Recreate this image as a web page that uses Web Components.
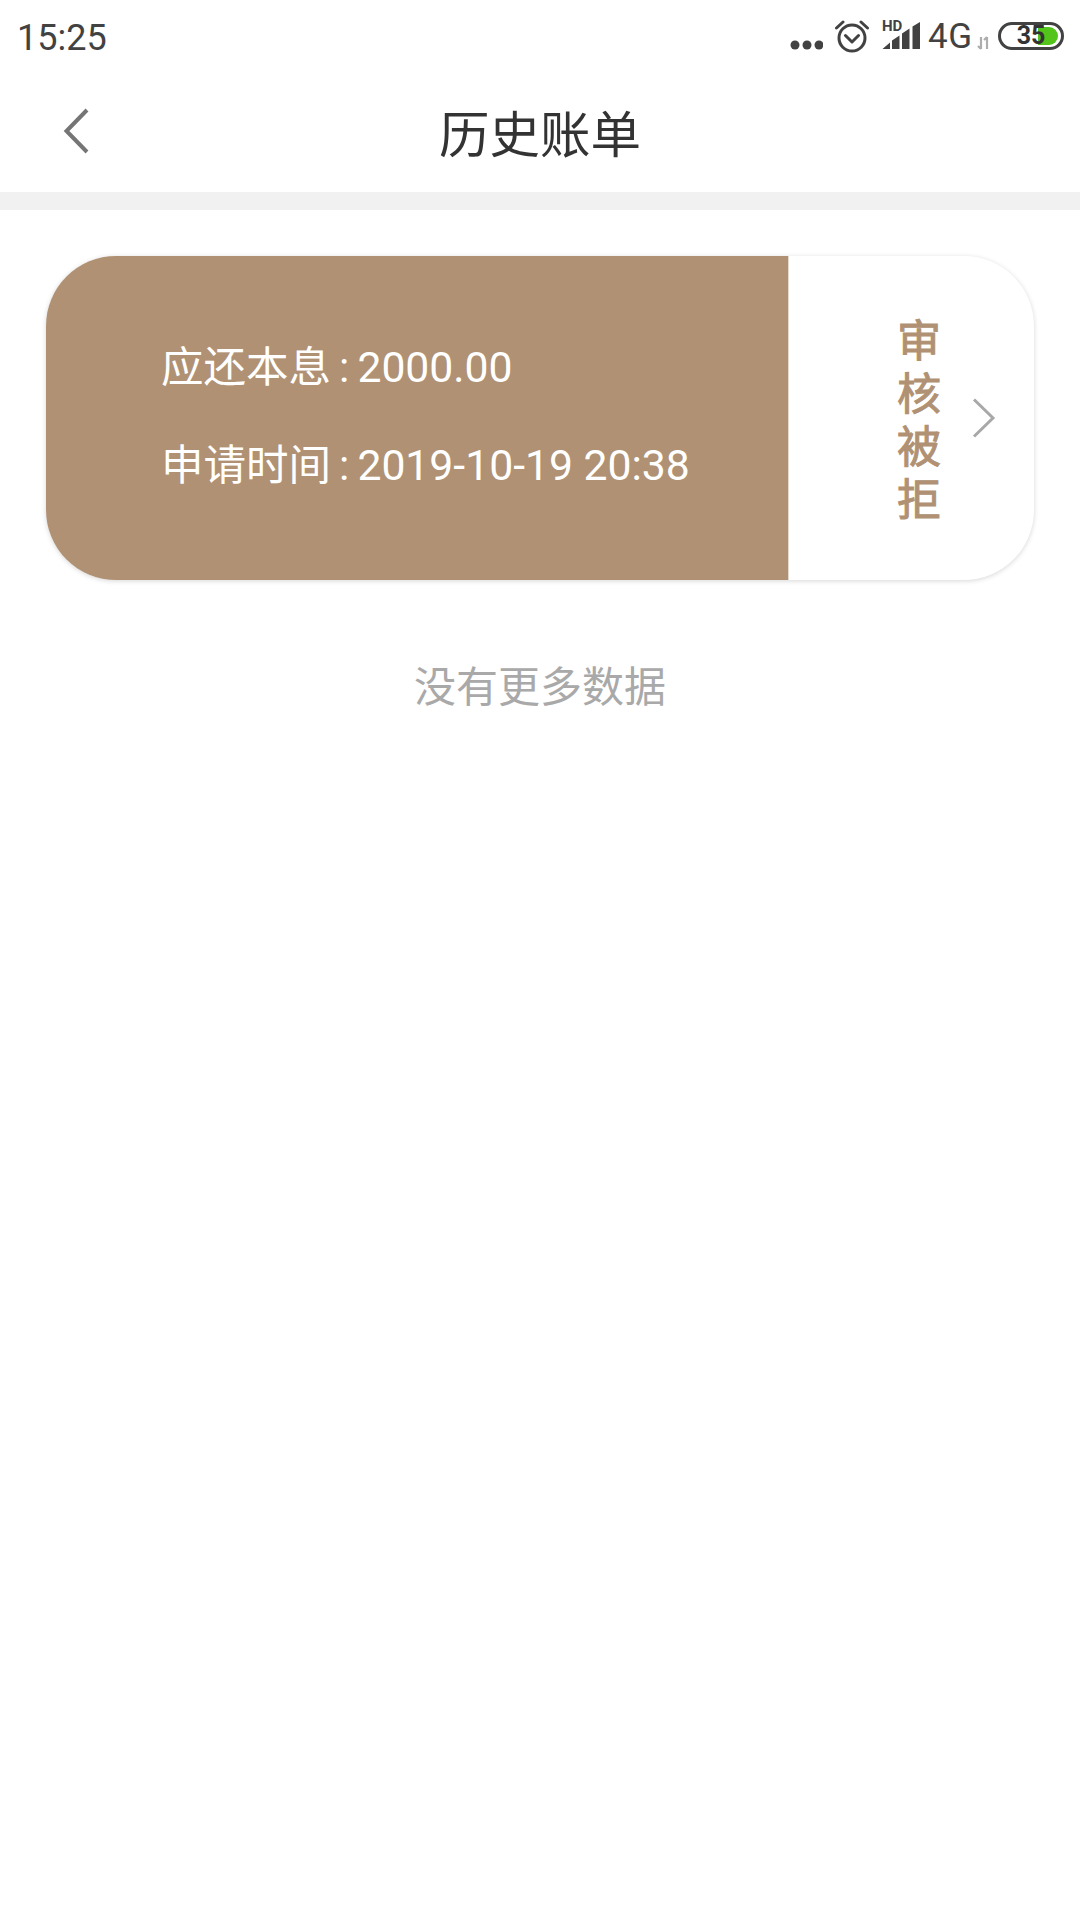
<!DOCTYPE html>
<html lang="zh">
<head>
<meta charset="utf-8">
<title>历史账单</title>
<style>
  html, body { margin: 0; padding: 0; background: #fff; }
  body { width: 1080px; height: 1920px; font-family: Roboto, "Noto Sans CJK SC", sans-serif; }
  bill-card b { font-weight: 400; font-size: 42.700px; word-spacing: 0; }
</style>
</head>
<body>
<status-bar time="15:25"></status-bar>
<nav-header>历史账单</nav-header>
<bill-list>
  <bill-card status="审核被拒">
    <span>应还本息 : <b>2000.00</b></span>
    <span>申请时间 : <b>2019-10-19 20:38</b></span>
  </bill-card>
  <list-end>没有更多数据</list-end>
</bill-list>

<script>
class StatusBar extends HTMLElement {
  constructor() {
    super();
    this.attachShadow({ mode: 'open' });
  }

  connectedCallback() {
    this.shadowRoot.innerHTML = `
      <style>
        :host {
          display: flex;
          align-items: center;
          justify-content: space-between;
          height: 62px;
          padding: 0 16px 0 17px;
          color: #424242;
          font-family: Roboto, sans-serif;
        }
        .time { font-size: 36px; padding-top: 13px; line-height: 48px; }
        .icons { display: flex; align-self: flex-start; align-items: flex-start; padding-top: 20px; }
        .icons svg { display: block; flex: none; }
        .signal { position: relative; margin-left: 11px; width: 41px; height: 30px; }
        .hd { position: absolute; left: 1px; top: -1px; font-size: 15px; font-weight: 700; line-height: 14px; }
        .net { font-size: 35px; line-height: 34px; margin: 0 0 0 6px; width: 45px; letter-spacing: 0.5px; }
        .battery { position: relative; margin: 2px 0 0 7px; width: 66px; height: 28px; }
        .level {
          position: absolute; left: 15px; top: 0; width: 36px; text-align: center;
          font-size: 25px; font-weight: 700; line-height: 28px; color: #333;
        }
      </style>
      <div class="time">${this.getAttribute('time')}</div>
      <div class="icons">
        <svg width="33" height="36" viewBox="0 0 33 36" style="margin-top:14px"><g fill="#424242"><circle cx="5" cy="11" r="4.5"/><circle cx="17" cy="11" r="4.5"/><circle cx="29" cy="11" r="4.5"/></g></svg>
        <svg width="36" height="36" viewBox="0 0 36 36" style="margin-left:11px" fill="none" stroke="#424242" stroke-width="3">
          <circle cx="18" cy="18" r="13"/>
          <path d="M11.500 15.500 18 22 24.500 15.500M2.500 8 9 2M33.500 8 27 2" stroke-linecap="round" stroke-linejoin="round"/>
        </svg>
        <div class="signal">
          <span class="hd">HD</span>
          <svg width="41" height="30" viewBox="0 0 41 30" fill="#424242">
            <path d="M1.500 29 9 22.500V29ZM11 29V20.500L18.500 15.500V29ZM21 29V13.500L28.500 8.500V29ZM31.500 29V6.500L39 2V29Z"/>
          </svg>
        </div>
        <div class="net">4G</div>
        <svg width="14" height="14" viewBox="0 0 14 14" style="margin:16px 0 0 4px" fill="none" stroke="#adadad" stroke-width="2.200"><path d="M4 1v12M1 10 4 13M10 13V1M7 4 10 1"/></svg>
        <div class="battery">
          <svg width="66" height="28" viewBox="0 0 66 28">
            <path d="M40 5h11a9 9 0 0 1 0 18H40z" fill="#52c41a"/>
            <rect x="1.500" y="1.500" width="63" height="25" rx="12.500" fill="none" stroke="#424242" stroke-width="3"/>
          </svg>
          <span class="level">35</span>
        </div>
      </div>
    `;
  }
}

class NavHeader extends HTMLElement {
  constructor() {
    super();
    this.attachShadow({ mode: 'open' });
  }

  connectedCallback() {
    this.shadowRoot.innerHTML = `
      <style>
        :host {
          display: flex;
          position: relative;
          align-items: center;
          justify-content: center;
          height: 130px;
          border-bottom: 18px solid #f1f1f1;
          color: #333;
          font-family: "Noto Sans CJK SC", sans-serif;
          font-size: 50.500px;
        }
        .back { position: absolute; left: 62px; top: 46px; }
        svg { display: block; }
        .title { line-height: 60px; margin-top: 8px; }
      </style>
      <svg class="back" width="32" height="46" viewBox="0 0 32 46" fill="none" stroke="#757575" stroke-width="4">
        <path d="M25 2 4.500 23 25 44"/>
      </svg>
      <div class="title"><slot></slot></div>
    `;
  }
}

class BillList extends HTMLElement {
  constructor() {
    super();
    this.attachShadow({ mode: 'open' });
  }

  connectedCallback() {
    this.shadowRoot.innerHTML = `
      <style>
        :host {
          display: flex;
          flex-direction: column;
          padding: 46px 46px 0;
        }
      </style>
      <slot></slot>
    `;
  }
}

class BillCard extends HTMLElement {
  constructor() {
    super();
    this.attachShadow({ mode: 'open' });
  }

  connectedCallback() {
    const status = this.getAttribute('status');
    this.shadowRoot.innerHTML = `
      <style>
        :host {
          display: flex;
          height: 324px;
          border-radius: 70px;
          overflow: hidden;
          background: #fff;
          box-shadow: 0 1px 5px rgba(0, 0, 0, 0.16);
          font-family: Roboto, "Noto Sans CJK SC", sans-serif;
        }
        .info {
          flex: none;
          width: 742px;
          box-sizing: border-box;
          display: flex;
          flex-direction: column;
          justify-content: center;
          gap: 47px;
          padding: 0 0 3px 115px;
          background: #b09173;
          color: #fff;
          font-size: 42.500px;
          line-height: 50px;
          word-spacing: -2.500px;
        }
        ::slotted(span) { display: block; }
        .state {
          flex: 1;
          display: flex;
          align-items: center;
          border-left: 1px solid #e3dacf;
          padding-left: 108px;
        }
        .label {
          width: 44px;
          font-family: "Noto Sans CJK SC", sans-serif;
          font-size: 44px;
          font-weight: 400;
          -webkit-text-stroke: 1px #b09173;
          line-height: 53px;
          color: #b09173;
        }
        svg { display: block; margin-left: 31px; }
      </style>
      <div class="info"><slot></slot></div>
      <div class="state">
        <div class="label">${status}</div>
        <svg width="24" height="40" viewBox="0 0 24 40" fill="none" stroke="#a8a8a8" stroke-width="3">
          <path d="M2 1.500 21 20 2 38.500"/>
        </svg>
      </div>
    `;
  }
}

class ListEnd extends HTMLElement {
  constructor() {
    super();
    this.attachShadow({ mode: 'open' });
  }

  connectedCallback() {
    this.shadowRoot.innerHTML = `
      <style>
        :host {
          display: block;
          margin-top: 77px;
          text-align: center;
          color: #a9a9a9;
          font-family: "Noto Sans CJK SC", sans-serif;
          font-size: 42px;
          line-height: 54px;
        }
      </style>
      <slot></slot>
    `;
  }
}

customElements.define('status-bar', StatusBar);
customElements.define('nav-header', NavHeader);
customElements.define('bill-list', BillList);
customElements.define('bill-card', BillCard);
customElements.define('list-end', ListEnd);
</script>
</body>
</html>
